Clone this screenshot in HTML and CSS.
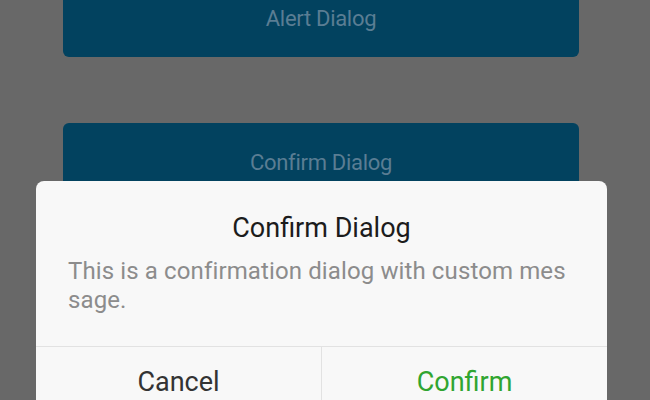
FILE: index.html
```html
<!DOCTYPE html>
<html lang="en">
<head>
    <meta charset="UTF-8">
    <meta name="viewport" content="width=device-width, initial-scale=1.0">
    <title>Dialogs</title>
    <link rel="stylesheet" href="styles.css">
</head>
<body>

<div class="container">
    <button type="button" class="demo-button">Alert Dialog</button>
    <button type="button" class="demo-button">Confirm Dialog</button>
</div>

<div class="dialog">
    <div class="dialog-body">
        <h2 class="dialog-title">Confirm Dialog</h2>
        <p class="dialog-message">This is a confirmation dialog with custom mes sage.</p>
    </div>
    <div class="dialog-actions">
        <button type="button" class="dialog-button cancel">Cancel</button>
        <button type="button" class="dialog-button confirm">Confirm</button>
    </div>
</div>

</body>
</html>
```

FILE: styles.css
```css
body {
    margin: 0;
    font-family: Roboto, "Liberation Sans", sans-serif;
    background-color: #686868;
    height: 100vh;
    overflow: hidden;
}

.container {
    display: flex;
    flex-direction: column;
    gap: 66px;
    padding: 0 71px 0 63px;
    margin-top: -21px;
}

.demo-button {
    height: 78px;
    background-color: #02425f;
    color: #5a7d93;
    border: none;
    border-radius: 6px;
    font-family: Roboto, "Liberation Sans", sans-serif;
    font-size: 22px;
    letter-spacing: -0.3px;
}

.dialog {
    position: fixed;
    left: 36px;
    top: 181px;
    width: 571px;
    background-color: #f8f8f8;
    border-radius: 8px;
}

.dialog-body {
    padding: 32px 32px 31px;
}

.dialog-title {
    margin: 0 0 14px;
    text-align: center;
    font-size: 27px;
    font-weight: normal;
    color: #1c1c1c;
    line-height: 30px;
}

.dialog-message {
    margin: 0;
    font-size: 24px;
    line-height: 29px;
    letter-spacing: 0.12px;
    color: #8c8c8c;
}

.dialog-actions {
    display: flex;
    border-top: 1px solid #e2e2e2;
}

.dialog-button {
    flex: 1;
    height: 70px;
    background: none;
    border: none;
    font-family: Roboto, "Liberation Sans", sans-serif;
    font-size: 27px;
    padding-bottom: 2px;
}

.cancel {
    color: #333;
    border-right: 1px solid #e2e2e2;
}

.confirm {
    color: #30a530;
}
```
